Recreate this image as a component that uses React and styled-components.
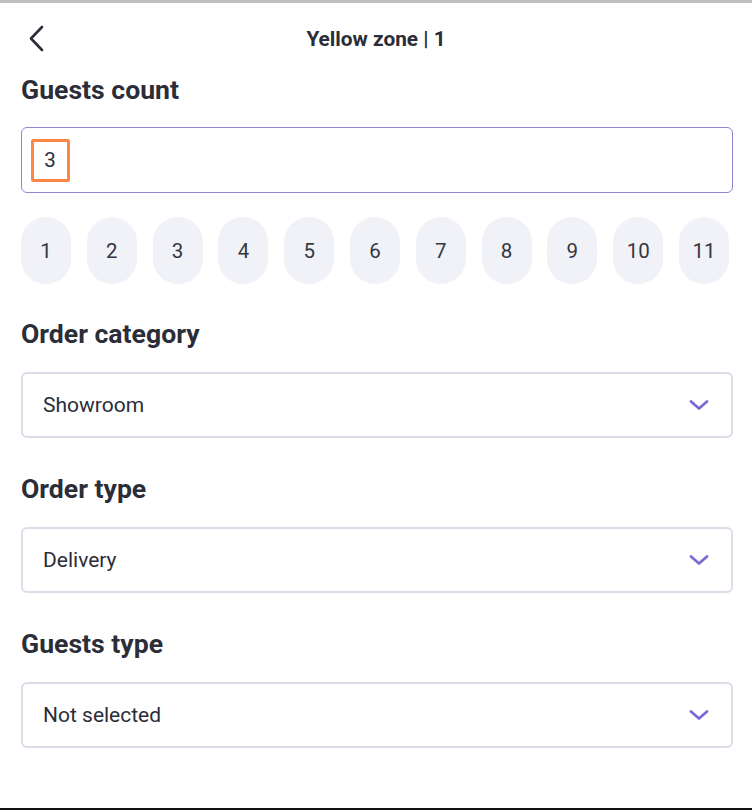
import React from "react";
import styled, { createGlobalStyle } from "styled-components";

const Global = createGlobalStyle`
  html, body { margin: 0; padding: 0; background: #fff; }
  body { font-family: Roboto, "Noto Sans", "Liberation Sans", sans-serif; color: #2b2d38; }
  * { box-sizing: border-box; }
`;

const Page = styled.div`
  width: 752px;
  height: 810px;
  border-top: 3px solid #bfbfbf;
  border-bottom: 2px solid #111;
  padding: 0 19px 0 21px;
  display: flex;
  flex-direction: column;
  overflow: hidden;
`;

const Header = styled.header`
  height: 72px;
  display: grid;
  grid-template-columns: 40px 1fr 40px;
  align-items: center;
`;

const BackButton = styled.button`
  border: 0;
  background: none;
  padding: 0;
  margin-left: 6px;
  width: 20px;
  height: 28px;
  display: flex;
  align-items: center;
  justify-content: center;
  cursor: pointer;
`;

const Title = styled.h1`
  margin: 0;
  text-align: center;
  font-size: 20.8px;
  font-weight: 700;
  color: #2b2d38;
  position: relative;
  left: -1px;
`;

const Heading = styled.h2`
  margin: ${(p) => p.$top}px 0 0 0;
  font-size: 26.6px;
  line-height: 30px;
  font-weight: 700;
  color: #2b2d38;
`;

const InputBox = styled.div`
  margin-top: 22px;
  width: 712px;
  height: 66px;
  border: 1px solid #8e84d4;
  border-radius: 6px;
  display: flex;
  align-items: center;
  padding-left: 9px;
`;

const Focused = styled.span`
  width: 39px;
  height: 43px;
  border: 3px solid #fb8646;
  border-radius: 2px;
  display: flex;
  align-items: center;
  justify-content: center;
  font-size: 20.5px;
  color: #2b2d38;
  padding-right: 1px;
`;

const Chips = styled.div`
  margin-top: 24px;
  width: 708px;
  display: flex;
  justify-content: space-between;
`;

const Chip = styled.button`
  width: 50px;
  height: 67px;
  border: 0;
  border-radius: 25px;
  background: #f1f1f8;
  font-family: inherit;
  font-size: 20.5px;
  color: #34363f;
  padding: 0;
  display: flex;
  align-items: center;
  justify-content: center;
`;

const Select = styled.div`
  margin-top: 23px;
  width: 712px;
  height: 66px;
  border: 2px solid #dddce9;
  border-radius: 6px;
  display: flex;
  align-items: center;
  justify-content: space-between;
  padding: 0 22px 0 20px;
  font-size: 21px;
  color: #2b2d38;
`;

const Chevron = () => (
  <svg width="20" height="12" viewBox="0 0 20 12" fill="none">
    <path d="M2 2.5 L10 9.5 L18 2.5" stroke="#7a6bd4" strokeWidth="2.8" strokeLinecap="round" strokeLinejoin="round" />
  </svg>
);

const BackIcon = () => (
  <svg width="18" height="28" viewBox="0 0 18 28" fill="none">
    <path d="M14 2 L3 13.5 L14 25" stroke="#2b2d38" strokeWidth="2.6" strokeLinecap="round" strokeLinejoin="round" />
  </svg>
);

const sections = [
  { label: "Order category", value: "Showroom" },
  { label: "Order type", value: "Delivery" },
  { label: "Guests type", value: "Not selected" },
];

export default function App() {
  return (
    <>
      <Global />
      <Page>
        <Header>
          <BackButton aria-label="Back">
            <BackIcon />
          </BackButton>
          <Title>Yellow zone | 1</Title>
          <span />
        </Header>
        <Heading $top={0}>Guests count</Heading>
        <InputBox>
          <Focused>3</Focused>
        </InputBox>
        <Chips>
          {Array.from({ length: 11 }, (_, i) => (
            <Chip key={i}>{i + 1}</Chip>
          ))}
        </Chips>
        {sections.map((s, i) => (
          <React.Fragment key={s.label}>
            <Heading $top={i === 0 ? 35 : 36}>{s.label}</Heading>
            <Select>
              <span>{s.value}</span>
              <Chevron />
            </Select>
          </React.Fragment>
        ))}
      </Page>
    </>
  );
}
